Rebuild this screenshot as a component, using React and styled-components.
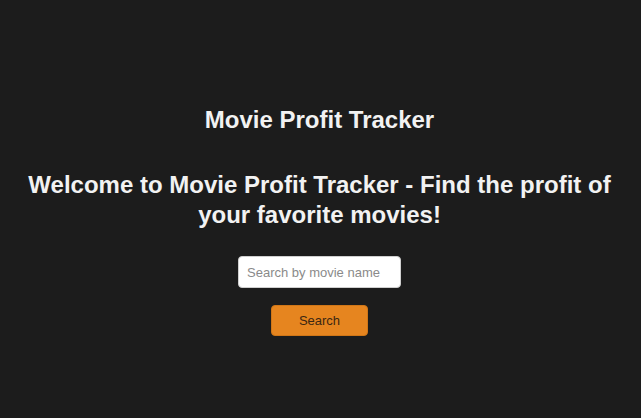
import React, { useState } from 'react'
import styled, { createGlobalStyle } from 'styled-components'

const GlobalStyle = createGlobalStyle`
  body {
    margin: 0;
    background: #1c1c1c;
    font-family: "Liberation Sans", Arial, sans-serif;
  }
`

const Page = styled.main`
  display: flex;
  flex-direction: column;
  align-items: center;
  min-height: 100vh;
  box-sizing: border-box;
  padding: 106px 22px 0 20px;
  color: #f2f2f2;
  text-align: center;
`

const Title = styled.h1`
  margin: 0;
  font-size: 24px;
  line-height: 28px;
  font-weight: 700;
`

const Welcome = styled.h2`
  margin: 36px 0 0;
  font-size: 24px;
  line-height: 30px;
  font-weight: 700;
`

const SearchForm = styled.form`
  display: flex;
  flex-direction: column;
  align-items: center;
  gap: 17px;
  margin-top: 26px;
`

const SearchInput = styled.input`
  box-sizing: border-box;
  width: 163px;
  height: 32px;
  padding: 0 8px;
  border: 1px solid #cfcfcf;
  border-radius: 4px;
  background: #fff;
  font-family: inherit;
  font-size: 13px;
  color: #333;
  outline: none;

  &::placeholder {
    color: #8a8a8a;
  }
`

const SearchButton = styled.button`
  box-sizing: border-box;
  width: 97px;
  height: 31px;
  border: 1px solid #d07617;
  border-radius: 4px;
  background: #e6851f;
  color: #3b2712;
  font-family: inherit;
  font-size: 13px;
  cursor: pointer;
`

export default function App() {
  const [query, setQuery] = useState('')

  return (
    <>
      <GlobalStyle />
      <Page>
        <Title>Movie Profit Tracker</Title>
        <Welcome>
          Welcome to Movie Profit Tracker - Find the profit of your favorite
          movies!
        </Welcome>
        <SearchForm onSubmit={(e) => e.preventDefault()}>
          <SearchInput
            type="text"
            placeholder="Search by movie name"
            value={query}
            onChange={(e) => setQuery(e.target.value)}
          />
          <SearchButton type="submit">Search</SearchButton>
        </SearchForm>
      </Page>
    </>
  )
}
